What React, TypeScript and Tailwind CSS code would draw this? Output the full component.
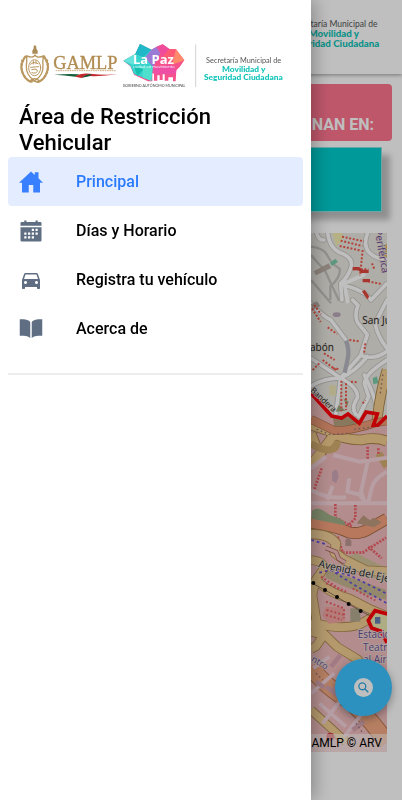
import type { IconType } from "react-icons";
import { IoBookSharp, IoCalendarSharp, IoHomeSharp, IoSearchSharp } from "react-icons/io5";
import { MdDirectionsCar } from "react-icons/md";

const MENU: { label: string; href: string; icon: IconType; active?: boolean }[] = [
  { label: "Principal", href: "#principal", icon: IoHomeSharp, active: true },
  { label: "Días y Horario", href: "#horario", icon: IoCalendarSharp },
  { label: "Registra tu vehículo", href: "#registro", icon: MdDirectionsCar },
  { label: "Acerca de", href: "#acerca", icon: IoBookSharp },
];

function Logo({ className }: { className: string }) {
  return (
    <svg viewBox="54 36 795 144" className={className} role="img" aria-label="GAMLP La Paz">
      {/* coat of arms */}
      <g fill="none" stroke="#b9975f" strokeLinecap="round">
        <path d="M80 78q22 8 25-4q3 12 26 4q-4 14-2 28q2 30-25 46q-27-16-25-46q2-14 1-28z" strokeWidth="4" />
        <ellipse cx="104" cy="113" rx="18" ry="24" strokeWidth="3" />
        <path d="M92 103q8-10 22-2M92 112l24-2M95 119q18-5 17 5q-3 8-16 4M100 92v10M108 92v8" strokeWidth="3" />
        <path d="M76 80q-22 30-2 60q9 14 22 15M132 80q22 30 2 60q-9 14-22 15" strokeWidth="7" strokeDasharray="7 5" />
        <path d="M66 90q-8 25 7 48M142 90q8 25-7 48" strokeWidth="4" strokeDasharray="3 7" />
        <path d="M88 154q16-16 32 0M94 150l20 7" strokeWidth="4" />
      </g>
      <path d="M97 71v-9l4-7v-6l4-4 4 5v6l4 6v9z" fill="#a98b58" />
      <text x="160" y="116" fontSize="55" fill="#b18c52" stroke="#b18c52" strokeWidth="1" fontFamily="Liberation Serif, serif">GAMLP</text>
      <path d="M167 122h180" stroke="#c9ae82" strokeWidth="3" strokeDasharray="5 2" />
      <path d="M162 134q46-3 76-1q-8 5-13 7q-32-5-63-6z" fill="#17613f" />
      <path d="M225 140q17-12 45-9q40 5 83 2q-46 7-88 5q-12 0-20 6z" fill="#c3282d" />
      <path d="M246 143q14-13 30-10l-8 6z" fill="#16593c" />

      {/* La Paz gem */}
      <path d="M370 92l36-20 14-30 34 17 16-9 18-7 20 14 20 1 25 33-14 20-10 10-2 33h-8v-12h-14v10h-11v-24h-6v22h-9v-14h-7v16h-10v-22h-5v24h-13l-42-20-11-25z" fill="#f5528c" />
      <path d="M370 92l36-20 14-30 34 17 8 28-8 65-52-20-11-25z" fill="#36d4cc" />
      <path d="M406 72l14-30 34 17-24 22z" fill="#1fb8c9" />
      <path d="M370 92l36-20-5 33z" fill="#66e3dc" />
      <path d="M401 105l28 14-17 20z" fill="#13bfae" />
      <path d="M429 112l29-5-4 45-26-9z" fill="#4ee0cd" />
      <path d="M454 59l16-9 11 20-22 42-24-30z" fill="#9b7ad6" />
      <path d="M470 50l18-7 20 14-20 23z" fill="#ef4d9b" />
      <path d="M488 80l20-23 20 1-12 42z" fill="#ff5a74" />
      <path d="M528 58l25 33-37 13z" fill="#ff8a69" />
      <path d="M459 112l57-8 13 17-3 12h-65z" fill="#ee4fa5" />
      <text x="399" y="101" fontSize="39" fontWeight="700" fill="#fff" fontFamily="Open Sans, sans-serif">La Paz</text>
      <text x="399" y="113" fontSize="12" fill="#fff" fontFamily="Open Sans, sans-serif">ciudad en movimiento</text>
      <text x="462" y="171" fontSize="11" textAnchor="middle" fill="#444" fontFamily="Lato, sans-serif">GOBIERNO AUTÓNOMO MUNICIPAL</text>

      <path d="M587 43v128" stroke="#d4d4d4" strokeWidth="3" />
      <g textAnchor="middle" fontFamily="Lato, sans-serif">
        <text x="731" y="99" fontSize="22" fill="#555">Secretaría Municipal de</text>
        <text x="731" y="125" fontSize="25" fontWeight="900" fill="#10c4b8">Movilidad y</text>
        <text x="730" y="151" fontSize="25" fontWeight="900" fill="#10c4b8">Seguridad Ciudadana</text>
      </g>
    </svg>
  );
}

function CityMap() {
  return (
    <svg viewBox="-843 279 1116 1557" preserveAspectRatio="xMaxYMin slice" className="block h-[519px] w-full" role="img" aria-label="Mapa de restricción">
      <path d="M-843 279H273V1836H-843z" fill="#e9e7e0" />
      <path d="M-843 760H45l62 68 30 6 19-12 34 28 20-34 34 6-12 34 14-1 27-27V1836H-843z" fill="#efbcbd" />
      <path d="M110 279h28q12 20-18 40z" fill="#f2edb1" />
      <path d="M273 310q-20 20-8 48l8 16z" fill="#e8b46c" />

      {/* streets outside the restricted area */}
      <g fill="none" stroke="#c4c2bd" strokeWidth="7">
        <path d="M45 320q40 5 50 28q12 25 36 38q4 25-28 53v41M45 345q20 24 42 47l42 90M45 420l60 70" />
      </g>
      <g fill="none" stroke="#c8c6c1" strokeWidth="16" strokeLinejoin="round" strokeLinecap="round">
        <path d="M95 279q6 50 45 62q33 15 25 42q-10 30-31 47l4 50M215 279q-15 35 4 58q15 17 52 23M62 279q5 22 22 21M273 430l-48 50M225 480q-20-30-88-46M170 480l16 16q-12 30-1 52l29 36-20 62-60 68M45 490q30 35 60 50l45 60M273 480l-36 70q8 40 36 75M194 646q40 16 79-12M134 714L45 655M134 714q-50 0-89 24M134 714q45-20 80-65M134 714l-15 110M134 714q55 30 50 60q-20 30-4 50M205 705q30 60 35 90M273 660q-65 40-68 70l13 40-30 60" />
      </g>
      <g fill="none" stroke="#fff" strokeWidth="11" strokeLinejoin="round" strokeLinecap="round">
        <path d="M95 279q6 50 45 62q33 15 25 42q-10 30-31 47l4 50M215 279q-15 35 4 58q15 17 52 23M62 279q5 22 22 21M273 430l-48 50M225 480q-20-30-88-46M203 405l-58 25 10 55M170 480l16 16q-12 30-1 52l29 36-20 62-60 68M45 490q30 35 60 50l45 60M273 480l-36 70q8 40 36 75M194 646q40 16 79-12M134 714L45 655M134 714q-50 0-89 24M134 714q45-20 80-65M134 714l-15 110M134 714q55 30 50 60q-20 30-4 50M205 705q30 60 35 90M273 660q-65 40-68 70l13 40-30 60" />
      </g>
      <path d="M150 602q12 30 4 60l-8 36" fill="none" stroke="#b7b7c2" strokeWidth="13" />
      <path d="M45 492l18-8 10 14-22 12zM53 394l45-24 8 14-46 22z" fill="#bbaea6" />
      <path d="M102 368l16-12 8 10-18 12z" fill="#7bcba9" />
      <path d="M230 715l12-6 6 20-16 4z" fill="#7bcba9" />
      <path d="M100 736h19v30h-19z" fill="#ece6b4" />
      <path d="M128 795l-9 20 30-3zM142 775l16 10-5 15z" fill="#a1a77d" />
      <ellipse cx="122" cy="524" rx="12" ry="7" fill="#b8a8b8" />
      <path d="M110 828q35 0 62 8l35 10-90 30z" fill="#b5a07e" />
      <g fill="none" stroke="#f0594c" strokeWidth="6" strokeDasharray="6 5">
        <path d="M138 290l66 14M134 302l65 16M131 318l64 14M200 330l-8 78M172 388h45M228 370l8 20M205 422l52 10M206 462l12 16M48 506l26 40M55 495l20 28M95 562l28 20M160 600l28 4M208 610l-4 30M84 640l32 20M80 660l40 30M50 690l20-20M110 685l20 2M136 722v92M150 730v80M165 725l22 2M200 790l8-10" />
      </g>
      <path d="M170 386h18l10 8h20M200 422h22M202 452l14 20" fill="none" stroke="#e2483e" strokeWidth="10" />

      {/* main avenues */}
      <g fill="none" strokeLinejoin="round">
        <path d="M273 690q-20 65-30 150M45 855l60 20q35 25 90 25q45-10 78 4M110 890L58 960M45 880l14 36" stroke="#a67f44" strokeWidth="32" />
        <path d="M273 690q-20 65-30 150M45 855l60 20q35 25 90 25q45-10 78 4M110 890L45 975M45 880l14 36" stroke="#f3cd8e" strokeWidth="27" />
        <path d="M45 838l70 34q45 2 128-25l30-4" stroke="#ad7044" strokeWidth="26" />
        <path d="M45 838l70 34q45 2 128-25l30-4" stroke="#ec9a76" strokeWidth="22" />
        <path d="M45 1148q80 12 115 30q35 5 60-12l53-30" stroke="#a2693e" strokeWidth="36" />
        <path d="M45 1148q80 12 115 30q35 5 60-12l53-30" stroke="#f4a07c" strokeWidth="31" />
        <path d="M45 912q75 40 80-10M248 940l25 40" stroke="#d5ae70" strokeWidth="22" />
      </g>

      {/* residential blocks */}
      <g fill="none" stroke="#f3d3da" strokeWidth="12" strokeLinejoin="round">
        <path d="M45 985l45-36M112 945l78 20 83-12M215 965l-20 90 15 40M110 1038l-16 42M160 1015l-6 40 36 8 20 26M45 1050q50 28 105 22M45 1090h228M273 995q-40 20-46 50l-10 42" />
      </g>
      <path d="M108 998q5-14 16-6l4 20-8 18-12-8z" fill="#cda7b6" />
      <g fill="none" stroke="#ef6068" strokeWidth="8" strokeDasharray="6 4">
        <path d="M215 920v38M247 925v20M77 985l-22 62M118 1092v40l50 28M178 1095v40l-20 20M125 1190l15 48h60l70-45M217 1220l40 35" />
      </g>
      <g fill="#9fae87">
        <path d="M48 1112q15-12 35 0l20 14 30 10q20 12 13 20l-100-20z" />
        <path d="M122 1260l60-20 90 45v38q-70-10-120-50z" fill="#d1c198" />
        <path d="M90 1290l50 14 130 45v30q-90-20-180-65z" fill="#c5b590" />
      </g>
      <path d="M182 1150l20-24 20 15 10-8 26 14-24 15z" fill="#be9b7e" />
      <path d="M148 1200l10-8 8 12v14h-18z" fill="#bd9691" />

      <g fill="none" strokeLinejoin="round">
        <path d="M45 1182q55 0 75 28l-4 28 30 22 65 32 62 3" stroke="#b28d50" strokeWidth="31" />
        <path d="M45 1182q55 0 75 28l-4 28 30 22 65 32 62 3" stroke="#f1cf99" strokeWidth="26" />
        <path d="M45 1260q40 5 38 26l-24 34q45 42 100 55l58 30 56 24M58 1320l-9 45 12 75-16 24M61 1450q70 20 127 5l38-22M58 1456l66 65 62 38 20 42 67 45M45 1475l38 10-23 34-15 8" stroke="#af8b50" strokeWidth="29" />
        <path d="M45 1260q40 5 38 26l-24 34q45 42 100 55l58 30 56 24M58 1320l-9 45 12 75-16 24M61 1450q70 20 127 5l38-22M58 1456l66 65 62 38 20 42 67 45M45 1475l38 10-23 34-15 8" stroke="#f0cd92" strokeWidth="24" />
        <path d="M45 1580q40 60 120 105l60 60 48 60" stroke="#b87850" strokeWidth="53" />
        <path d="M45 1580q40 60 120 105l60 60 48 60" stroke="#f3aa84" strokeWidth="47" />
        <path d="M45 1710l55 50 50 46" stroke="#ae8b55" strokeWidth="28" />
        <path d="M45 1710l55 50 50 46" stroke="#f0cd92" strokeWidth="22" />
        <path d="M80 1750l55-70M45 1660l70-60M70 1690l80 70M145 1790l55-72M100 1550l-48 34" stroke="#f3d3dd" strokeWidth="11" />
        <path d="M105 1580l28-34M150 1602l-36 46M200 1640l-50 34M90 1640l35 25M60 1625l25 18M170 1770l34-25" stroke="#d7a5b0" strokeWidth="14" />
      </g>

      <path d="M163 1405h30v40h-30z" fill="#b2aa8f" />
      <path d="M88 1400h52l8 45-50 6-18-25z" fill="#f2a7a2" />
      <path d="M90 1385l54 20v30M92 1410l50 14M90 1425l48 14M75 1310l60 40M90 1330l60 25M170 1345l68 36" fill="none" stroke="#ec6065" strokeWidth="6" strokeDasharray="6 6" />
      <path d="M46 1200l48 14M70 1298l35-8 70 45 98 55M105 1290l60 18 105 52M108 1280l60 24" fill="none" stroke="#604fd8" strokeWidth="5" strokeDasharray="8 9" />
      <path d="M90 1224l30 12 8 20 20 12" fill="none" stroke="#9f565b" strokeWidth="14" />
      <path d="M90 1224l30 12 8 20 20 12" fill="none" stroke="#efbcb8" strokeWidth="10" />
      <path d="M62 868l40 16 55-4M175 868l60-8M253 760l8-60M60 1600l20 20M180 1750l18 26" fill="none" stroke="#97707a" strokeWidth="4" strokeDasharray="5 8" />
      <path d="M45 1328l42 22 36 21 35 21 36 21 35 18 29 28" fill="none" stroke="#544330" strokeWidth="2" />
      <g fill="#080808">
        <circle cx="52" cy="1329" r="6" />
        <circle cx="87" cy="1350" r="6" />
        <circle cx="123" cy="1371" r="6" />
        <circle cx="158" cy="1392" r="6" />
        <circle cx="194" cy="1413" r="6" />
        <circle cx="229" cy="1434" r="6" />
        <circle cx="258" cy="1461" r="6" />
      </g>

      {/* limits of the restricted area */}
      <path d="M236 1413l37 10v84l-18-33-29-10-10-25z" fill="#e9e6af" />
      <path d="M237 1431h16v20h-16z" fill="#687fb3" />
      <g fill="none" stroke="#ff0009" strokeWidth="11">
        <path d="M45 760l62 68 30 6 19-12 34 28 20-34 34 6-12 34 14-1 27-27" />
        <path d="M275 1422l-38-10-20 29 10 23 28 10 18 34" />
      </g>
      <circle cx="103" cy="1790" r="12" fill="#d83e42" />

      <g fontFamily="Open Sans, sans-serif" fontSize="30" stroke="#e5ddd3" strokeWidth="4" paintOrder="stroke" fill="#222">
        <text x="199" y="552">San Juan</text>
        <text x="42" y="632">abón</text>
        <text x="42" y="753" fontSize="24" transform="rotate(43 42 753)">Bandera</text>
        <text x="66" y="1281" fontSize="31" transform="rotate(12 66 1281)">Avenida del Ejército</text>
        <g fill="#6f4a96">
          <text x="236" y="270" transform="rotate(80 236 270)">Periférica</text>
          <text x="185" y="1495">Estación</text>
          <text x="201" y="1532">Teatro</text>
          <text x="201" y="1569">al Aire</text>
          <text x="44" y="1562" fontSize="27" transform="rotate(31 44 1562)">ntro</text>
        </g>
      </g>
    </svg>
  );
}

function Drawer() {
  return (
    <aside className="fixed inset-y-0 left-0 z-20 w-[311px] max-w-full overflow-y-auto bg-white px-2 pt-[42px] shadow-[4px_0_16px_rgba(0,0,0,0.28)]">
      <Logo className="ml-[10px] block h-12 w-[265px]" />
      <h1 className="mt-[14px] mb-[1px] px-[11px] text-[22px] leading-[26px] font-medium text-black">Área de Restricción Vehicular</h1>
      <nav className="border-b-2 border-[#ededed] pb-5">
        {MENU.map(({ label, href, icon: Icon, active }) => (
          <a
            key={label}
            href={href}
            className={`flex h-[49px] items-center gap-[33px] rounded px-[11px] text-base font-medium ${active ? "bg-[#e4ecff] text-[#2b7bff]" : "text-black"}`}
          >
            <Icon size={24} className={active ? "text-[#3880ff]" : "text-[#5f6e82]"} />
            {label}
          </a>
        ))}
      </nav>
    </aside>
  );
}

export default function App() {
  return (
    <div className="min-h-screen overflow-x-hidden bg-white font-['Roboto',sans-serif]">
      <header className="flex h-[74px] items-start justify-end bg-white pt-[2px] pr-[22px] shadow-[0_1px_4px_rgba(0,0,0,0.4)]">
        <Logo className="h-14 w-[310px]" />
      </header>

      <main className="pt-[10px]">
        <div className="mx-[10px] flex h-[57px] items-end justify-end rounded bg-[#ff748f] px-[18px] pb-1">
          <h2 className="text-base leading-6 font-bold text-white">TERMINAN EN:</h2>
        </div>
        <div className="mx-5 mt-[6px] h-[65px] border border-[#8ee0e0] bg-[#00cccc] shadow-[8px_8px_6px_rgba(0,0,0,0.25)]" />
        <div className="relative mx-[15px] mt-[21px]">
          <CityMap />
          <div className="absolute right-0 bottom-0 bg-white/50 px-[5px] text-xs leading-[18px] text-black">GAMLP © ARV</div>
        </div>
      </main>

      <button
        type="button"
        aria-label="Buscar"
        className="fixed right-[10px] bottom-[84px] flex size-[57px] items-center justify-center rounded-full bg-[#3bc2ff] shadow-[0_3px_8px_rgba(0,0,0,0.35)]"
      >
        <span className="flex size-[19px] items-center justify-center rounded-full bg-white text-[#2fa6e0]">
          <IoSearchSharp size={13} />
        </span>
      </button>

      <div className="fixed inset-0 z-10 bg-black/25" />
      <Drawer />
    </div>
  );
}
